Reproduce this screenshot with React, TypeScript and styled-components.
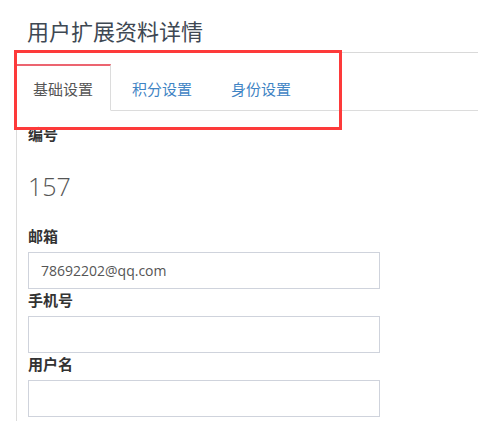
import styled, { createGlobalStyle } from 'styled-components';

const GlobalStyle = createGlobalStyle`
  html, body {
    margin: 0;
    padding: 0;
    background: #fff;
  }
  body {
    font-family: 'Open Sans', 'Noto Sans CJK SC', sans-serif;
    color: #333;
  }
`;

const Page = styled.div`
  position: relative;
  box-sizing: border-box;
  min-height: 100vh;
  padding-left: 16px;
  display: flex;
  flex-direction: column;
`;

const Header = styled.div`
  box-sizing: border-box;
  height: 53px;
  padding: 10px 0 0 11px;
  border-bottom: 1px solid #d9d9d9;
  display: flex;
  align-items: center;
`;

const Title = styled.h1`
  margin: 0;
  font-size: 22px;
  font-weight: 400;
  line-height: 26px;
  color: #3e4853;
`;

const TabList = styled.div`
  display: flex;
  margin-top: 11px;
  border-bottom: 1px solid #dcdcdc;
`;

const Tab = styled.div<{ $active?: boolean }>`
  box-sizing: border-box;
  height: 47px;
  margin: 0 4px -1px 0;
  padding: 1px 17px 0 16px;
  display: flex;
  align-items: center;
  font-size: 15px;
  cursor: pointer;
  background: ${(p) => (p.$active ? '#fff' : 'transparent')};
  border-style: solid;
  border-width: 2px 1px 1px 1px;
  border-color: ${(p) =>
    p.$active ? '#ec6470 #dcdcdc #fff #dcdcdc' : 'transparent'};
  color: ${(p) => (p.$active ? '#555' : '#3f84c4')};
`;

const Content = styled.div`
  flex: 1;
  border-left: 1px solid #dcdcdc;
  padding: 13px 0 0 11px;
`;

const Label = styled.div<{ $gap?: number }>`
  font-size: 15px;
  font-weight: 700;
  line-height: 20px;
  color: #333;
  margin-top: ${(p) => p.$gap ?? 1}px;
`;

const Value = styled.div`
  margin-top: 30px;
  font-size: 25px;
  font-weight: 300;
  line-height: 25px;
  color: #555;
`;

const Input = styled.input`
  box-sizing: border-box;
  display: block;
  width: 352px;
  height: 37px;
  margin-top: 6px;
  padding: 0 12px;
  border: 1px solid #cfd3dc;
  border-radius: 0;
  outline: none;
  font-family: 'Open Sans', 'Noto Sans CJK SC', sans-serif;
  font-size: 14px;
  color: #555;
  background: #fff;
`;

// red annotation frame drawn over the tab bar
const Highlight = styled.div`
  position: absolute;
  left: 14px;
  top: 50px;
  width: 328px;
  height: 80px;
  box-sizing: border-box;
  border: 3px solid #fd3a3a;
  pointer-events: none;
`;

const tabs = ['基础设置', '积分设置', '身份设置'];

export default function App() {
  return (
    <>
      <GlobalStyle />
      <Page>
        <Header>
          <Title>用户扩展资料详情</Title>
        </Header>
        <TabList>
          {tabs.map((t, i) => (
            <Tab key={t} $active={i === 0}>
              {t}
            </Tab>
          ))}
        </TabList>
        <Content>
          <Label $gap={0}>编号</Label>
          <Value>157</Value>
          <Label $gap={27}>邮箱</Label>
          <Input defaultValue="78692202@qq.com" />
          <Label>手机号</Label>
          <Input />
          <Label>用户名</Label>
          <Input />
        </Content>
        <Highlight />
      </Page>
    </>
  );
}
